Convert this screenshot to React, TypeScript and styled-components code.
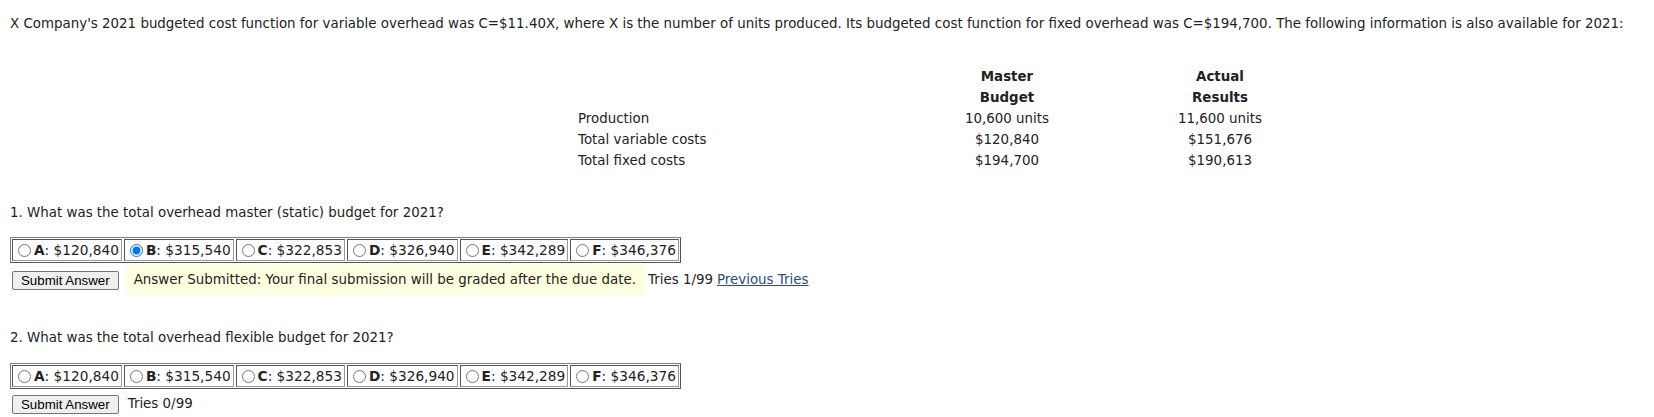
import React from "react";
import styled, { createGlobalStyle } from "styled-components";

const Global = createGlobalStyle`
  html, body { margin: 0; padding: 0; background: #fff; }
  body {
    font-family: "DejaVu Sans", Verdana, sans-serif;
    font-size: 13.4px;
    color: #222;
  }
`;

const Page = styled.div`
  padding: 16px 10px 0 10px;
`;

const Intro = styled.p`
  margin: 0;
  line-height: 16px;
  white-space: nowrap;
`;

const DataTable = styled.div`
  display: grid;
  grid-template-columns: 322px 214px 212px;
  margin: 34px 0 0 568px;
  line-height: 21px;
`;

const Cell = styled.div<{ $center?: boolean; $bold?: boolean }>`
  text-align: ${(p) => (p.$center ? "center" : "left")};
  font-weight: ${(p) => (p.$bold ? "bold" : "normal")};
`;

const Question = styled.div<{ $top: number }>`
  margin-top: ${(p) => p.$top}px;
  line-height: 16px;
`;

const Options = styled.div<{ $top: number }>`
  display: inline-flex;
  gap: 2px;
  padding: 1px;
  margin-top: ${(p) => p.$top}px;
  border: 1px solid #808080;
  border-right-color: #555;
  border-bottom-color: #555;
  font-size: 13.7px;
`;

const Option = styled.label`
  display: flex;
  align-items: center;
  height: 20px;
  padding: 0 2px 0 0;
  border: 1px solid #555;
  border-right-color: #999;
  border-bottom-color: #999;
  white-space: nowrap;
  line-height: 16px;
`;

const Radio = styled.input`
  margin: 0 3px 0 5px;
  width: 13px;
  height: 13px;
`;

const Letter = styled.b`
  font-weight: bold;
`;

const ActionRow = styled.div<{ $top: number }>`
  display: flex;
  align-items: center;
  min-height: 26px;
  margin-top: ${(p) => p.$top}px;
`;

const Button = styled.button`
  font-family: "Liberation Sans", Arial, sans-serif;
  font-size: 13.3px;
  color: #000;
  background: #efefef;
  border: 1px solid #767676;
  border-radius: 2px;
  padding: 1px 8px;
  height: 19px;
  line-height: 15px;
  margin: 0 6px 0 2px;
`;

const Notice = styled.span`
  background: #ffffe0;
  padding: 7px 9px;
  line-height: 16px;
`;

const Tries = styled.span<{ $gap: number }>`
  margin-left: ${(p) => p.$gap}px;
  line-height: 16px;
`;

const Link = styled.a`
  color: #2b4d7a;
  text-decoration: underline;
  margin-left: 4px;
`;

const choices = [
  ["A", "$120,840"],
  ["B", "$315,540"],
  ["C", "$322,853"],
  ["D", "$326,940"],
  ["E", "$342,289"],
  ["F", "$346,376"],
];

function OptionSet({ name, checked, top }: { name: string; checked?: string; top: number }) {
  return (
    <Options $top={top}>
      {choices.map(([l, v]) => (
        <Option key={l}>
          <Radio type="radio" name={name} defaultChecked={checked === l} />
          <Letter>{l}</Letter>: {v}
        </Option>
      ))}
    </Options>
  );
}

export default function App() {
  return (
    <>
      <Global />
      <Page>
        <Intro>
          X Company's 2021 budgeted cost function for variable overhead was C=$11.40X, where X is the number of units produced. Its budgeted cost function for fixed overhead was C=$194,700. The following information is also available for 2021:
        </Intro>
        <DataTable>
          <Cell />
          <Cell $center $bold>Master</Cell>
          <Cell $center $bold>Actual</Cell>
          <Cell />
          <Cell $center $bold>Budget</Cell>
          <Cell $center $bold>Results</Cell>
          <Cell>Production</Cell>
          <Cell $center>10,600 units</Cell>
          <Cell $center>11,600 units</Cell>
          <Cell>Total variable costs</Cell>
          <Cell $center>$120,840</Cell>
          <Cell $center>$151,676</Cell>
          <Cell>Total fixed costs</Cell>
          <Cell $center>$194,700</Cell>
          <Cell $center>$190,613</Cell>
        </DataTable>
        <Question $top={34}>1. What was the total overhead master (static) budget for 2021?</Question>
        <OptionSet name="q1" checked="B" top={16} />
        <ActionRow $top={2}>
          <Button>Submit Answer</Button>
          <Notice>Answer Submitted: Your final submission will be graded after the due date.</Notice>
          <Tries $gap={3}>
            Tries 1/99<Link href="#">Previous Tries</Link>
          </Tries>
        </ActionRow>
        <Question $top={35}>2. What was the total overhead flexible budget for 2021?</Question>
        <OptionSet name="q2" top={17} />
        <ActionRow $top={2}>
          <Button>Submit Answer</Button>
          <Tries $gap={3}>Tries 0/99</Tries>
        </ActionRow>
      </Page>
    </>
  );
}
